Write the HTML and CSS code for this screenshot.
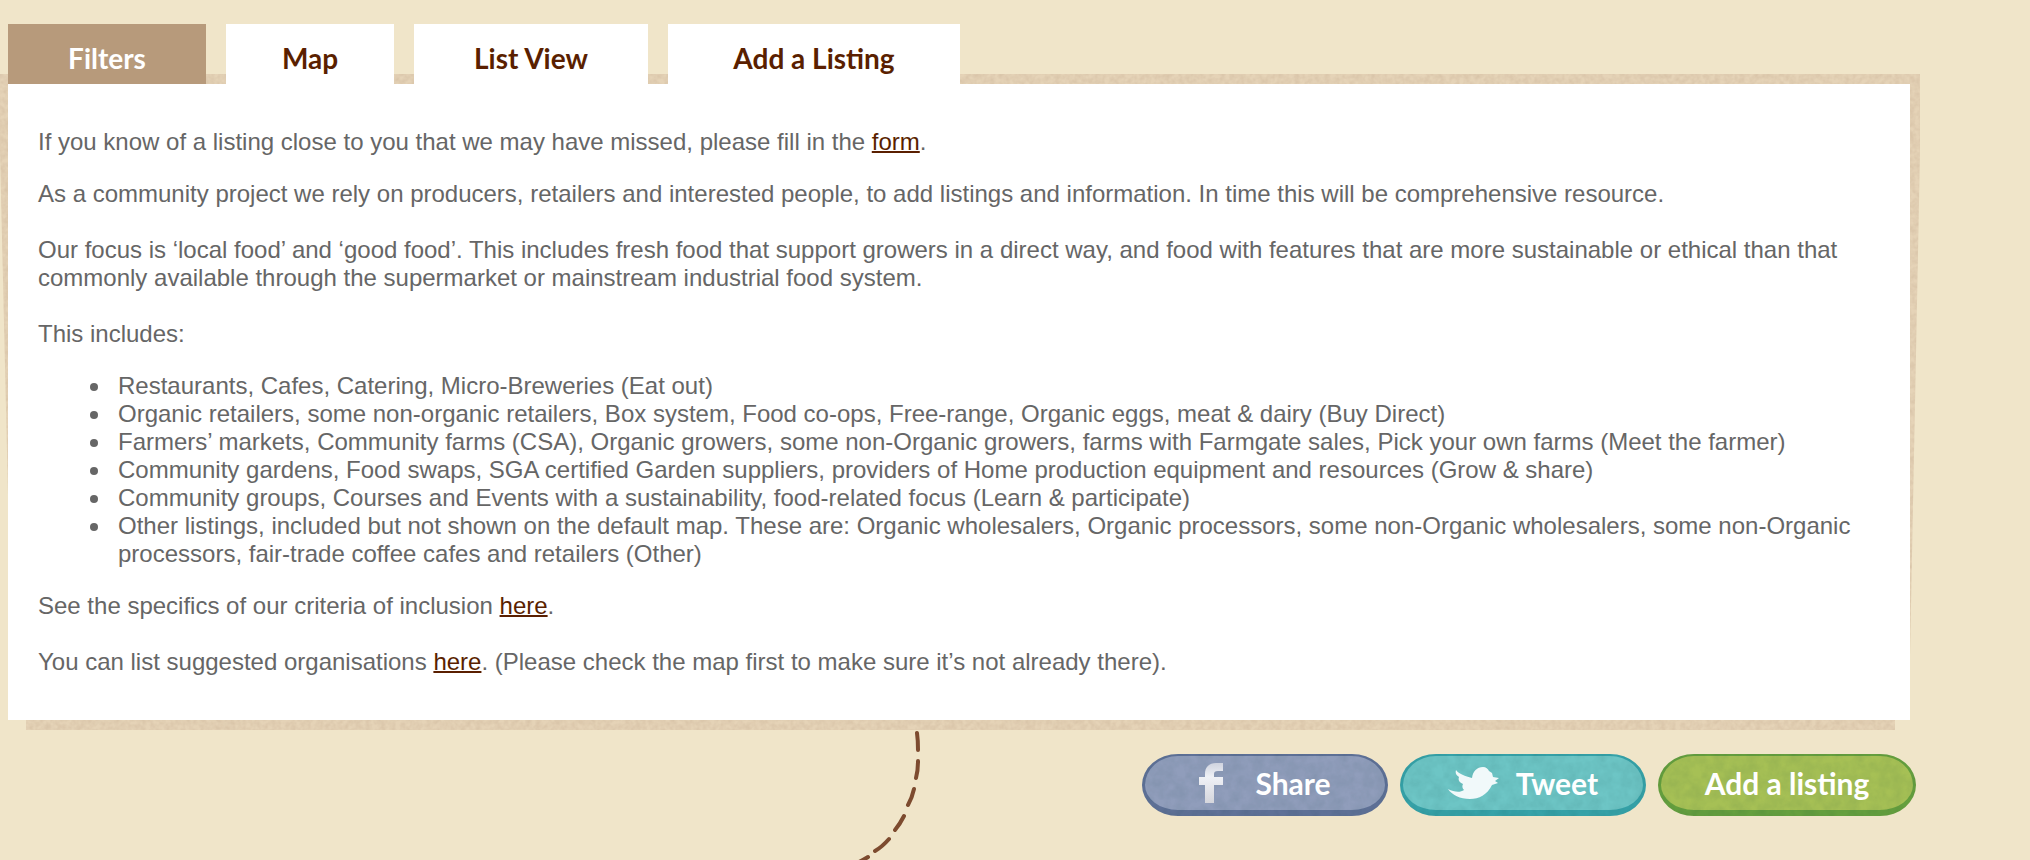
FILE: index.html
```html
<!DOCTYPE html>
<html lang="en">
<head>
<meta charset="utf-8">
<title>Food directory</title>
<link rel="stylesheet" href="styles.css">
</head>
<body>
<svg class="defs" aria-hidden="true">
  <filter id="paper" x="0" y="0" width="100%" height="100%" color-interpolation-filters="sRGB">
    <feTurbulence type="fractalNoise" baseFrequency="0.2" numOctaves="2" seed="4" result="n"/>
    <feColorMatrix in="n" type="matrix" values="0 0 0 0 0.5  0 0 0 0 0.35  0 0 0 0 0.25  0.2 0 0 0 -0.06" result="g"/>
    <feComposite in="g" in2="SourceAlpha" operator="in" result="grain"/>
    <feMerge><feMergeNode in="SourceGraphic"/><feMergeNode in="grain"/></feMerge>
  </filter>
  <filter id="felt" x="0" y="0" width="100%" height="100%" color-interpolation-filters="sRGB">
    <feTurbulence type="fractalNoise" baseFrequency="0.09" numOctaves="3" seed="9" result="n"/>
    <feColorMatrix in="n" type="matrix" values="0 0 0 0 0  0 0 0 0 0.2  0 0 0 0 0.2  0.14 0 0 0 -0.04" result="g"/>
    <feComposite in="g" in2="SourceAlpha" operator="in" result="grain"/>
    <feMerge><feMergeNode in="SourceGraphic"/><feMergeNode in="grain"/></feMerge>
  </filter>
</svg>
<main class="page">
  <nav class="tabs">
    <a class="tab tab-active" href="#filters">Filters</a>
    <a class="tab" href="#map">Map</a>
    <a class="tab" href="#list">List View</a>
    <a class="tab" href="#add">Add a Listing</a>
  </nav>
  <section class="board">
    <div class="edge edge-main"></div>
    <div class="edge edge-bottom"></div>
    <div class="panel">
      <p>If you know of a listing close to you that we may have missed, please fill in the <a href="#form">form</a>.</p>
      <p>As a community project we rely on producers, retailers and interested people, to add listings and information. In time this will be comprehensive resource.<br><br>Our focus is ‘local food’ and ‘good food’. This includes fresh food that support growers in a direct way, and food with features that are more sustainable or ethical than that commonly available through the supermarket or mainstream industrial food system.<br><br>This includes:</p>
      <ul>
        <li>Restaurants, Cafes, Catering, Micro-Breweries (Eat out)</li>
        <li>Organic retailers, some non-organic retailers, Box system, Food co-ops, Free-range, Organic eggs, meat &amp; dairy (Buy Direct)</li>
        <li>Farmers’ markets, Community farms (CSA), Organic growers, some non-Organic growers, farms with Farmgate sales, Pick your own farms (Meet the farmer)</li>
        <li>Community gardens, Food swaps, SGA certified Garden suppliers, providers of Home production equipment and resources (Grow &amp; share)</li>
        <li>Community groups, Courses and Events with a sustainability, food-related focus (Learn &amp; participate)</li>
        <li>Other listings, included but not shown on the default map. These are: Organic wholesalers, Organic processors, some non-Organic wholesalers, some non-Organic processors, fair-trade coffee cafes and retailers (Other)</li>
      </ul>
      <p>See the specifics of our criteria of inclusion <a href="#criteria">here</a>.<br><br>You can list suggested organisations <a href="#suggest">here</a>. (Please check the map first to make sure it’s not already there).</p>
    </div>
  </section>
  <footer class="actions">
    <svg class="trail" viewBox="0 0 80 130" width="80" height="130" aria-hidden="true">
      <g fill="none" stroke="#7d4b2f" stroke-width="4" stroke-linecap="round">
        <path d="M69 3Q70 10 70 20M70 31Q70 41 68 48M66 59Q64 68 60 75M56 86Q52 94 47 100M41 109Q34 117 27 121M20 127Q12 132 2 136"/>
      </g>
    </svg>
    <a class="pill share" href="#share">
      <svg class="fb" viewBox="0 0 24 40" width="24" height="40" aria-hidden="true">
        <defs><linearGradient id="fbg" x1="0" y1="0" x2="0" y2="1"><stop offset="0" stop-color="#cfd3df"/><stop offset=".35" stop-color="#eff1f6"/><stop offset="1" stop-color="#d5d6dc"/></linearGradient></defs>
        <path fill="url(#fbg)" d="M6 40V22H0V14H6V11C6 4 10 0 17 0H24V8H19C16 8 15 9 15 11V14H24V22H15V40Z"/>
      </svg>
      <span>Share</span>
    </a>
    <a class="pill tweet" href="#tweet">
      <svg class="bird" viewBox="0 0 52 34" width="52" height="34" aria-hidden="true">
        <path fill="#f1f9fa" d="M8 4C11 8 17 10 24 12C25 5 29 1 35 1C38 1 40 3 41 5L44 7L45 11L51 12L47 15L50 17L44 19C39 29 31 33 22 33C12 33 4 29 0 23C6 26 12 27 16 24C14 22 14 20 15 18C11 16 10 14 11 11C8 9 7 7 8 4Z"/>
      </svg>
      <span>Tweet</span>
    </a>
    <a class="pill add" href="#add"><span>Add a listing</span></a>
  </footer>
</main>
</body>
</html>
```
FILE: styles.css
```css
* { box-sizing: border-box; }
body {
  margin: 0;
  background: #f0e5c9;
  color: #666;
  font: 24px/28px "Liberation Sans", Arial, sans-serif;
}
.defs { position: absolute; width: 0; height: 0; }
.page { padding: 24px 120px 44px 8px; overflow: hidden; }
.tabs {
  position: relative;
  z-index: 2;
  display: grid;
  grid-template-columns: 198px 168px 234px 292px;
  gap: 20px;
}
.tab, .pill {
  font-family: Lato, "Open Sans", sans-serif;
  font-weight: bold;
  text-decoration: none;
}
.tab {
  padding: 14px 0 6px;
  background: #fff;
  color: #5a1f00;
  font-size: 28px;
  line-height: 40px;
  text-align: center;
}
.tab-active { background: #b79a7b; color: #fff; }
.board { position: relative; }
.edge { position: absolute; background: #e5d3b7; filter: url(#paper); }
.edge-main {
  top: -10px;
  right: -10px;
  bottom: 0;
  left: -8px;
  clip-path: polygon(0 0, 100% 0, 100% 12%, calc(100% - 10px) 90%, 8px 65%, 0 12%);
}
.edge-bottom { left: 18px; right: 15px; bottom: -10px; height: 20px; }
.panel {
  position: relative;
  display: flow-root;
  padding: 20px 30px;
  background: #fff;
}
.panel p, .panel ul { margin: 24px 0; }
.panel ul { padding-left: 80px; list-style: none; }
.panel li { position: relative; }
.panel li::before {
  content: "";
  position: absolute;
  top: 11px;
  left: -28px;
  width: 8px;
  height: 8px;
  border-radius: 50%;
  background: #666;
}
.panel a { color: #5a1f00; text-decoration-thickness: 2px; }
.actions {
  position: relative;
  display: flex;
  justify-content: flex-end;
  gap: 12px;
  margin: 34px -6px 0 0;
}
.trail { position: absolute; left: 44%; top: -24px; overflow: visible; }
.pill {
  position: relative;
  isolation: isolate;
  display: flex;
  align-items: center;
  justify-content: center;
  min-width: 246px;
  height: 62px;
  padding: 0 40px 4px;
  color: #fff;
  font-size: 30px;
  line-height: 40px;
}
.pill::before {
  content: "";
  position: absolute;
  inset: 0;
  z-index: -1;
  border: solid;
  border-width: 2px 3px 6px;
  border-radius: 36px / 31px;
  filter: url(#felt);
}
.share { gap: 32px; }
.share::before { background: #909dbb; border-color: #5f7197; }
.tweet { gap: 16px; }
.tweet::before { background: #6dc5c5; border-color: #36a2a8; }
.add { min-width: 258px; }
.add::before { background: #a6c055; border-color: #659f3e; }
```
